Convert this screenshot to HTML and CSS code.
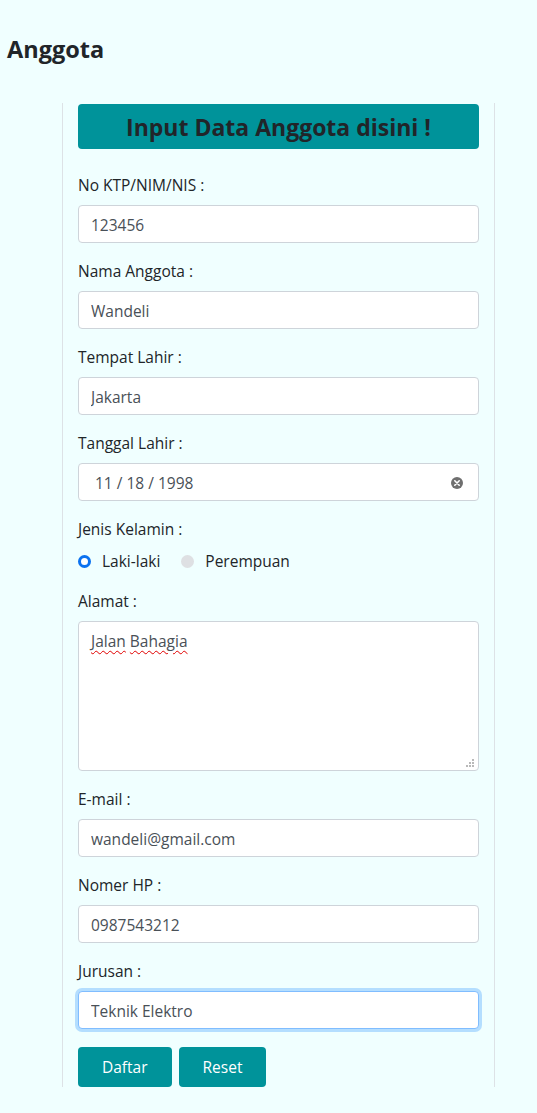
FILE: index.html
```html
<!DOCTYPE html>
<html lang="id">
<head>
<meta charset="utf-8">
<title>Anggota</title>
<link rel="stylesheet" href="styles.css">
</head>
<body>
<h4 class="page-title">Anggota</h4>
<div class="column">
  <h3 class="banner">Input Data Anggota disini !</h3>
  <form class="form">
    <div class="group">
      <label class="label">No KTP/NIM/NIS :</label>
      <input class="control" type="text" value="123456">
    </div>
    <div class="group">
      <label class="label">Nama Anggota :</label>
      <input class="control" type="text" value="Wandeli">
    </div>
    <div class="group">
      <label class="label">Tempat Lahir :</label>
      <input class="control" type="text" value="Jakarta">
    </div>
    <div class="group">
      <label class="label">Tanggal Lahir :</label>
      <div class="control date">
        <span class="date-text">11 / 18 / 1998</span>
        <svg class="clear" width="12" height="12" viewBox="0 0 12 12"><circle cx="6" cy="6" r="6" fill="#6f6f6f"/><path d="M3.8 3.8 L8.2 8.2 M8.2 3.8 L3.8 8.2" stroke="#fff" stroke-width="1.6" stroke-linecap="round"/></svg>
      </div>
    </div>
    <div class="group">
      <label class="label">Jenis Kelamin :</label>
      <div class="radios">
        <span class="radio-item"><span class="radio checked"></span>Laki-laki</span>
        <span class="radio-item"><span class="radio"></span>Perempuan</span>
      </div>
    </div>
    <div class="group">
      <label class="label">Alamat :</label>
      <div class="control area"><span class="typo">Jalan</span> <span class="typo">Bahagia</span>
        <svg class="grip" width="8" height="8" viewBox="0 0 8 8"><g fill="#b9b9b9"><rect x="6" y="0" width="2" height="2"/><rect x="3" y="3" width="2" height="2"/><rect x="6" y="3" width="2" height="2"/><rect x="0" y="6" width="2" height="2"/><rect x="3" y="6" width="2" height="2"/><rect x="6" y="6" width="2" height="2"/></g></svg>
      </div>
    </div>
    <div class="group">
      <label class="label">E-mail :</label>
      <input class="control" type="text" value="wandeli@gmail.com">
    </div>
    <div class="group">
      <label class="label">Nomer HP :</label>
      <input class="control" type="text" value="0987543212">
    </div>
    <div class="group">
      <label class="label">Jurusan :</label>
      <input class="control focus" type="text" value="Teknik Elektro">
    </div>
    <div class="actions">
      <button class="btn" type="button">Daftar</button>
      <button class="btn" type="button">Reset</button>
    </div>
  </form>
</div>
</body>
</html>
```
FILE: styles.css
```css
* { box-sizing: border-box; }
body {
  margin: 0;
  background: #f0ffff;
  font-family: "Open Sans", "Noto Sans", sans-serif;
  font-size: 16px;
  color: #212529;
  min-height: 1113px;
}
.page-title {
  margin: 0;
  padding: 35px 7px 0;
  font-size: 23.5px;
  line-height: 29px;
  font-weight: 700;
  height: 103px;
}
.column {
  margin-left: 62px;
  width: 433px;
  border-left: 1px solid #dde2e6;
  border-right: 1px solid #dde2e6;
  padding: 1px 15px 0;
}
.banner {
  margin: 0 0 24px;
  height: 45px;
  background: #00939a;
  border-radius: 4px;
  font-size: 23px;
  font-weight: 700;
  line-height: 46px;
  text-align: center;
  color: #212529;
}
.form { display: flex; flex-direction: column; }
.group { display: flex; flex-direction: column; margin-bottom: 16px; }
.label { line-height: 24px; margin-bottom: 8px; font-size: 15.5px; }
.control {
  height: 38px;
  width: 100%;
  border: 1px solid #ced4da;
  border-radius: 4px;
  background: #fff;
  padding: 7px 12px 5px;
  font-family: inherit;
  font-size: 15.5px;
  line-height: 24px;
  color: #495057;
  outline: none;
}
.date {
  display: flex;
  align-items: center;
  justify-content: space-between;
  padding: 1px 15px 0 16px;
}
.clear { display: block; }
.area {
  height: 150px;
  position: relative;
}
.typo {
  text-decoration: underline wavy #e00000;
  text-decoration-thickness: 1px;
  text-underline-offset: 3px;
}
.grip { position: absolute; right: 4px; bottom: 3px; }
.radios { display: flex; align-items: center; height: 24px; font-size: 15.5px; }
.radio-item { display: flex; align-items: center; margin-right: 21px; }
.radio {
  width: 13px;
  height: 13px;
  border-radius: 50%;
  background: #dee0e3;
  margin-right: 11px;
}
.radio.checked {
  background: #fff;
  border: 3.5px solid #0b72f0;
}
.focus {
  border-color: #80bdff;
  box-shadow: 0 0 0 3px rgba(0, 123, 255, 0.25);
}
.actions { display: flex; gap: 7px; margin-top: 2px; }
.btn {
  height: 40px;
  padding: 0 24px;
  border: none;
  border-radius: 4px;
  background: #00939a;
  color: #fff;
  font-family: inherit;
  font-size: 15.5px;
}
```
